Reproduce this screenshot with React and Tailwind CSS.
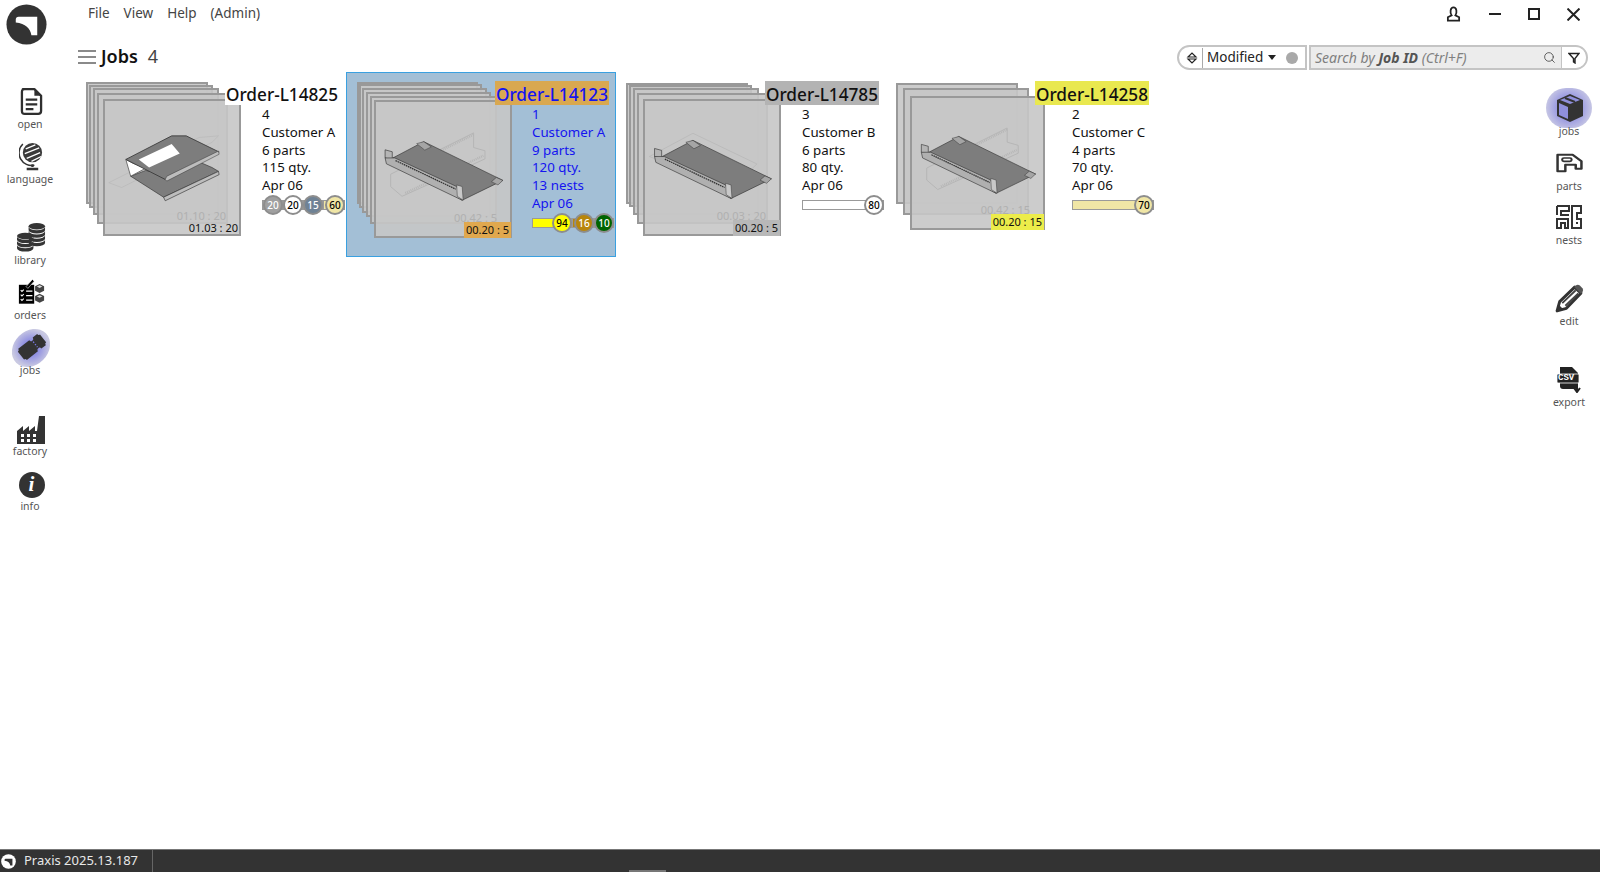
import { Search } from "lucide-react"

const font = "font-['Noto_Sans','Open_Sans',sans-serif]"

function Logo({ className, inner = "#fff" }) {
  return (
    <svg viewBox="0 0 42 42" className={className}>
      <circle cx="21" cy="21" r="20.5" fill="currentColor" />
      <path d="M10 16 Q10 13 13 13 L32 13 L32 32 L26 32 C25 25 20 20 10 19 Z" fill={inner} />
    </svg>
  )
}

function OpenIcon() {
  return (
    <svg viewBox="0 0 24 30" className="w-[23px] h-[29px]">
      <path d="M3 2 H15 L22 9 V25 Q22 28 19 28 H5 Q2 28 2 25 V5 Q2 2 5 2 Z" fill="#fff" stroke="#2f2f2f" strokeWidth="2.4" strokeLinejoin="round" />
      <path d="M15 2 V9 H22 Z" fill="#2f2f2f" />
      <path d="M6 13 H18 M6 18 H18 M6 23 H14" stroke="#2f2f2f" strokeWidth="2.2" />
    </svg>
  )
}

function GlobeIcon() {
  return (
    <svg viewBox="0 0 26 30" className="w-[25px] h-[29px]">
      <circle cx="14" cy="11" r="10" fill="#3a3a3a" />
      <path d="M7 7 L17 3 M6 12 L21 6 M8 17 L22 11 M13 20 L23 15" stroke="#fff" strokeWidth="1.4" />
      <path d="M4 2 A 13 13 0 0 0 16 24" fill="none" stroke="#333" strokeWidth="1.6" />
      <path d="M14 23 V26 M8 28 H20" stroke="#333" strokeWidth="2.4" />
    </svg>
  )
}

function Coins({ x, y, n }) {
  const rows = Array.from({ length: n }, (_, i) => i)
  return (
    <g>
      {rows.map((i) => (
        <path key={i} d={`M${x} ${y + i * 4.4} v3.4 a8.5 3.4 0 0 0 17 0 v-3.4 a8.5 3.4 0 0 1 -17 0 Z`} fill="#353535" />
      ))}
      <ellipse cx={x + 8.5} cy={y - 0.6} rx="8.5" ry="3.4" fill="#353535" />
    </g>
  )
}

function LibraryIcon() {
  return (
    <svg viewBox="0 0 30 30" className="w-[29px] h-[29px]">
      <Coins x={12} y={4} n={4} />
      <Coins x={0} y={14} n={3} />
    </svg>
  )
}

function OrdersIcon() {
  return (
    <svg viewBox="0 0 30 28" className="w-[27px] h-[26px]">
      <rect x="1" y="6" width="17" height="21" fill="#000" />
      <path d="M9 8 L16 0 L18 2 L11 10 Z" fill="#000" stroke="#fff" strokeWidth="0.6" />
      <path d="M3 12 l1.4 1.4 2-2 M3 17 l1.4 1.4 2-2 M3 22 l1.4 1.4 2-2 M9 13 H16 M9 18 H16 M9 23 H16" stroke="#fff" strokeWidth="1.2" fill="none" />
      <path d="M24 5 l5 2.5 v5 l-5 2.5 l-5 -2.5 v-5 Z M24 16 l5 2.5 v5 l-5 2.5 l-5 -2.5 v-5 Z" fill="#444" />
      <path d="M24 6.5 l3 1.5 l-3 1.5 l-3 -1.5 Z M24 17.5 l3 1.5 l-3 1.5 l-3 -1.5 Z" fill="#ddd" />
    </svg>
  )
}

function TicketIcon() {
  return (
    <svg viewBox="0 0 30 30" className="w-[30px] h-[30px]">
      <g transform="rotate(-38 15 15)">
        <path d="M1 10 A2 2 0 0 0 3 8 H17 A2.2 2.2 0 0 0 21.4 8 H27 A2 2 0 0 0 29 10 V20 A2 2 0 0 0 27 22 H21.4 A2.2 2.2 0 0 0 17 22 H3 A2 2 0 0 0 1 20 Z" fill="#333" />
        <path d="M19.2 11.5 V18.5" stroke="#7a7ae6" strokeWidth="1.2" strokeDasharray="1.5 1.5" />
      </g>
    </svg>
  )
}

function FactoryIcon() {
  return (
    <svg viewBox="0 0 28 28" className="w-[28px] h-[28px] mt-[3px]">
      <path d="M0 28 V15 L6 10 V15 L12 10 V15 L18 10 V15 H20 L22 0 H26 L28 0 V28 Z" fill="#333" />
      <path d="M4 18 h3 v3 h-3 Z M10 18 h3 v3 h-3 Z M16 18 h3 v3 h-3 Z M4 23 h3 v3 h-3 Z M10 23 h3 v3 h-3 Z M16 23 h3 v3 h-3 Z" fill="#fff" />
    </svg>
  )
}

function InfoIcon() {
  return (
    <div className="w-[26px] h-[26px] mt-[3px] rounded-full bg-[#333] text-white flex items-center justify-center font-['Liberation_Serif',serif] italic font-bold text-[21px] leading-none">
      i
    </div>
  )
}

function BoxIcon() {
  return (
    <svg viewBox="0 0 30 30" className="w-[30px] h-[30px] ml-[1px]">
      <path d="M15 1 L28 7 V23 L15 29 L2 23 V7 Z" fill="#333" />
      <path d="M4 10 L13 14 V26 L4 22 Z" fill="#8f8fdc" />
      <path d="M5 7 L15 3 L25 7 L15 11 Z" fill="#8f8fdc" />
      <path d="M10 5 L20 9" stroke="#333" strokeWidth="2" />
    </svg>
  )
}

function PartsIcon() {
  return (
    <svg viewBox="0 0 26 24" preserveAspectRatio="none" className="w-[27px] h-[20px] ml-[1px]">
      <path d="M1.5 2 H16 L24.5 10 V19 H19 V14 H9 V22 H1.5 Z" fill="none" stroke="#333" strokeWidth="2.4" strokeLinejoin="round" />
      <rect x="6" y="6" width="9" height="4" rx="1.5" fill="none" stroke="#333" strokeWidth="2" />
    </svg>
  )
}

function NestsIcon() {
  return (
    <svg viewBox="0 0 26 24" className="w-[26px] h-[24px]" fill="none" stroke="#333" strokeWidth="2">
      <path d="M1 1 H13 V6 H5 V10 H13 M1 1 V10 M1 14 H12 V23 H9 V18 H5 V23 H1 Z" />
      <path d="M16 1 H25 V8 H21 V14 H25 V23 H16 Z M20 18 H22" />
    </svg>
  )
}

function EditIcon() {
  return (
    <svg viewBox="0 0 28 28" className="w-[29px] h-[29px]">
      <path d="M2 26 L4.5 17 L19 3 L25 9 L11 23.5 Z" fill="#fff" stroke="#333" strokeWidth="2.8" strokeLinejoin="round" />
      <path d="M2 26 L3.6 20 L8 24.4 Z" fill="#333" />
      <path d="M7 18.5 L20 6 M10 21 L22.5 9" stroke="#444" strokeWidth="1.8" />
      <path d="M20 1.5 Q22 0 24 1.5 L26.5 4 Q28 6 26.5 8 L25 9.5 L18.5 3 Z" fill="#555" />
    </svg>
  )
}

function ExportIcon() {
  return (
    <div className="relative w-[26px] h-[27px]">
      <svg viewBox="0 0 26 27" className="w-[26px] h-[27px]">
        <path d="M4 1 H16 L22 7 V20 Q22 23 19 23 H7 Q4 23 4 20 Z" fill="#222" />
        <rect x="1" y="8" width="22" height="9" rx="1" fill="#222" stroke="#fff" strokeWidth="0.8" />
        <path d="M21 18 V25 M18 22 L21 26 L24 22" stroke="#222" strokeWidth="2" fill="none" />
      </svg>
      <span className="absolute left-[2px] top-[8px] text-[9px] leading-[9px] font-bold text-white font-['Liberation_Mono',monospace]">CSV</span>
    </div>
  )
}

function RailItem({ icon, label, className = "h-[55px]", iconClass = "" }) {
  return (
    <div className={`flex flex-col items-center ${className}`}>
      <div className={`h-[32px] flex items-center justify-center ${iconClass}`}>{icon}</div>
      <span className="text-[10.5px] leading-[14px] text-[#555]">{label}</span>
    </div>
  )
}

function PlatePart({ ghost }) {
  return (
    <svg viewBox="310 297 412 412" className="absolute inset-0 w-full h-full">
      {ghost && <path d="M320 550 L600 410 L660 405 L640 425 L360 565 Z" fill="none" stroke="#b8b8b8" strokeWidth="2" />}
      {/* lower plate sits behind the upper one */}
      <path d="M388 530 L490 595 L660 515 L640 503 L545 462 L445 515 L435 512 Z" fill="#7d7d7d" stroke="#333" strokeWidth="2" />
      <path d="M490 595 L495 606 L662 525 L660 515 Z" fill="#bdbdbd" stroke="#333" strokeWidth="2" />
      <path d="M373 478 L388 530 L435 505 L395 490 Z" fill="#fff" stroke="#333" strokeWidth="2" />
      <path d="M373 478 L515 405 L560 405 L662 455 L495 540 Z" fill="#7d7d7d" stroke="#333" strokeWidth="2.5" />
      <path d="M413 478 L515 430 L540 460 L445 503 Z" fill="#fff" />
      <path d="M495 540 L500 530 L660 452 L662 462 L500 545 Z" fill="#bdbdbd" stroke="#333" strokeWidth="1.5" />
    </svg>
  )
}

function BracketPart({ ghost }) {
  return (
    <svg viewBox="0 0 412 412" className="absolute inset-0 w-full h-full">
      {ghost === "flat" && <path d="M12 172 L147 100 L345 195 L265 275 Z" fill="none" stroke="#b5b5b5" strokeWidth="2" />}
      {ghost === "rail" && (
        <g fill="none" stroke="#b5b5b5">
          <path d="M45 222 L300 95 L300 140 L335 150 L335 175 L80 290 L45 260 Z" strokeWidth="3" />
          <path d="M90 280 L330 165 M120 190 L300 100" strokeWidth="7" strokeDasharray="3 3" />
        </g>
      )}
      <path d="M52 172 L147 122 L390 241 L265 302 Z" fill="#7d7d7d" stroke="#333" strokeWidth="2" />
      <path d="M28 147 L50 153 L50 178 L28 172 Z" fill="#b5b5b5" stroke="#333" strokeWidth="2" />
      <path d="M28 172 L32 190 L265 302 L248 260 L58 172 Z" fill="#b0b0b0" stroke="#333" strokeWidth="2" />
      <path d="M60 180 L245 268" stroke="#333" strokeWidth="4" strokeDasharray="5 2" />
      <path d="M248 255 L265 260 L268 302 L250 290 Z" fill="#c8c8c8" stroke="#333" strokeWidth="1.5" />
      <path d="M125 128 L147 122 L170 138 L150 148 Z M355 245 L370 232 L390 241 L375 255 Z" fill="#a5a5a5" stroke="#333" strokeWidth="1.5" />
    </svg>
  )
}

function Sheets({ rects, chip, ghostTime, time, part, partGhost }) {
  const front = rects[rects.length - 1]
  return (
    <div className="relative w-[176px] shrink-0 mt-px">
      {rects.map((r, i) => {
        const isFront = i === rects.length - 1
        return (
          <div
            key={i}
            className="absolute bg-[#c6c6c6]/90 border-2 border-[#999]"
            style={{ left: r[0], top: r[1], width: r[2] - r[0], height: r[3] - r[1] }}
          >
            {isFront && part === "plate" && <PlatePart ghost={partGhost} />}
            {isFront && part === "bracket" && <BracketPart ghost={partGhost} />}
          </div>
        )
      })}
      <div
        className="absolute flex flex-col items-end justify-end text-[11px]"
        style={{ left: front[0], top: front[1], width: front[2] - front[0] - 1, height: front[3] - front[1] }}
      >
        <span className="text-[#b0b0b0] pr-[14px] leading-[14px] -mb-[3px]">{ghostTime}</span>
        <span className={`relative px-[2px] leading-[16px] text-[#111] ${chip}`}>{time}</span>
      </div>
    </div>
  )
}

function ProgressBar({ segments }) {
  return (
    <div className="flex h-[20px] w-[90px]">
      {segments.map((s, i) => (
        <div key={i} className="relative flex items-center h-[20px] shrink-0" style={{ width: s.w }}>
          <div className={`w-full h-[10px] border border-[#9a9a9a] ${s.bar}`} />
          <div className={`absolute right-0 top-0 w-[20px] h-[20px] rounded-full border-2 border-[#8d8d8d] flex items-center justify-center text-[10px] font-medium leading-none ${s.dot}`}>
            {s.n}
          </div>
        </div>
      ))}
    </div>
  )
}

const jobs = [
  {
    title: "Order-L14825",
    titleBg: "bg-white",
    lines: ["4", "Customer A", "6 parts", "115 qty.", "Apr 06"],
    rects: [[0, 0, 122, 122], [3, 3, 127, 126], [7, 6, 133, 133], [11, 11, 142, 142], [17, 17, 155, 154]],
    chip: "",
    ghostTime: "01.10 : 20",
    time: "01.03 : 20",
    part: "plate",
    partGhost: true,
    segments: [
      { w: 21, n: 20, bar: "bg-[#a0a0a0]", dot: "bg-[#a0a0a0] text-white" },
      { w: 20, n: 20, bar: "bg-white", dot: "bg-white text-black" },
      { w: 20, n: 15, bar: "bg-[#6f8295]", dot: "bg-[#6f8295] text-white" },
      { w: 22, n: 60, bar: "bg-[#f0e6a6]", dot: "bg-[#f0e6a6] text-black" },
    ],
  },
  {
    title: "Order-L14123",
    titleBg: "bg-[#d9a850]",
    selected: true,
    lines: ["1", "Customer A", "9 parts", "120 qty.", "13 nests", "Apr 06"],
    rects: [[1, 0, 122, 122], [3, 2, 126, 126], [6, 6, 131, 131], [10, 10, 135, 135], [14, 14, 141, 142], [18, 18, 156, 156]],
    chip: "bg-[#e0a84e]",
    ghostTime: "00.42 : 5",
    time: "00.20 : 5",
    part: "bracket",
    partGhost: "rail",
    segments: [
      { w: 40, n: 94, bar: "bg-[#ffff00]", dot: "bg-[#ffff00] text-black" },
      { w: 22, n: 16, bar: "bg-[#b8860b]", dot: "bg-[#b8860b] text-white" },
      { w: 20, n: 10, bar: "bg-[#006400]", dot: "bg-[#006400] text-white" },
    ],
  },
  {
    title: "Order-L14785",
    titleBg: "bg-[#b3b3b3]",
    lines: ["3", "Customer B", "6 parts", "80 qty.", "Apr 06"],
    rects: [[0, 1, 122, 122], [3, 3, 126, 125], [7, 6, 133, 133], [11, 11, 142, 142], [17, 17, 155, 154]],
    chip: "bg-[#b8b8b8]",
    ghostTime: "00.03 : 20",
    time: "00.20 : 5",
    part: "bracket",
    partGhost: "flat",
    segments: [{ w: 82, n: 80, bar: "bg-white", dot: "bg-white text-black" }],
  },
  {
    title: "Order-L14258",
    titleBg: "bg-[#e9e84f]",
    lines: ["2", "Customer C", "4 parts", "70 qty.", "Apr 06"],
    rects: [[0, 1, 122, 122], [7, 6, 133, 133], [14, 14, 149, 148]],
    chip: "bg-[#ecec4a]",
    ghostTime: "00.42 : 15",
    time: "00.20 : 15",
    part: "bracket",
    partGhost: "rail",
    segments: [{ w: 82, n: 70, bar: "bg-[#f0e6a6]", dot: "bg-[#f0e6a6] text-black" }],
  },
]

function JobCard({ job }) {
  return (
    <div
      className={`w-[270px] h-[185px] flex pl-[10px] pt-[9px] shrink-0 ${
        job.selected ? "bg-[#a3bfd6] outline outline-1 -outline-offset-1 outline-[#3aa0e0] text-[#1414f0]" : "text-[#111]"
      }`}
    >
      <Sheets {...job} />
      <div className="w-[77px] flex flex-col items-start">
        <div className={`self-end relative z-10 whitespace-nowrap text-[17.2px] font-medium leading-[27px] h-[24px] px-px ${job.titleBg}`}>
          {job.title}
        </div>
        {job.lines.map((line, i) => (
          <div key={i} className="relative z-10 h-[17.75px] leading-[19.5px] text-[13.3px] whitespace-nowrap">{line}</div>
        ))}
        <div className="relative z-10 mt-[1.5px]">
          <ProgressBar segments={job.segments} />
        </div>
      </div>
    </div>
  )
}

export default function App() {
  return (
    <div className={`w-full h-screen flex flex-col bg-white overflow-hidden ${font}`}>
      <div className="flex flex-1 min-h-0">
        {/* left rail */}
        <div className="w-[60px] shrink-0 relative flex flex-col items-center pt-[85px]">
          <Logo className="absolute left-[6px] top-[4px] w-[41px] h-[41px] text-[#333]" />
          <RailItem icon={<OpenIcon />} label="open" iconClass="ml-[3px]" />
          <RailItem icon={<GlobeIcon />} label="language" iconClass="ml-[3px]" />
          <RailItem icon={<LibraryIcon />} label="library" className="h-[55px] mt-[26px]" iconClass="ml-[3px]" />
          <RailItem icon={<OrdersIcon />} label="orders" iconClass="ml-[3px]" />
          <div className="relative">
            <div className="absolute left-[-4px] top-[0px] w-[42px] h-[34px] -rotate-45 rounded-[50%] bg-[radial-gradient(circle,#7d7de0_15%,#c9c9e2_70%)]" />
            <RailItem icon={<TicketIcon />} label="jobs" className="relative h-[55px]" iconClass="ml-[3px]" />
          </div>
          <RailItem icon={<FactoryIcon />} label="factory" className="h-[55px] mt-[26px]" iconClass="ml-[3px]" />
          <RailItem icon={<InfoIcon />} label="info" iconClass="ml-[3px]" />
        </div>

        <div className="flex-1 min-w-0 flex flex-col">
          {/* menu + window controls */}
          <div className="h-[43px] shrink-0 flex items-start justify-between pl-[28px] pr-[20px]">
            <div className="flex gap-[14px] text-[13.5px] leading-[27px] text-[#444]">
              <span>File</span>
              <span>View</span>
              <span>Help</span>
              <span>(Admin)</span>
            </div>
            <div className="flex items-center h-[28px] gap-[26px]">
              <svg viewBox="0 0 16 17" className="w-[15px] h-[16px]" fill="none" stroke="#222" strokeWidth="1.9">
                <path d="M6 10 C4 7 4.5 1.5 8 1.5 C11.5 1.5 12 7 10 10 L14 12 V15.5 H2 V12 Z" />
              </svg>
              <div className="w-[12px] h-[2px] bg-[#222] ml-[2px]" />
              <div className="w-[12px] h-[12px] border-2 border-[#222] ml-[1px]" />
              <svg viewBox="0 0 12 12" className="w-[13px] h-[13px] ml-[1px]" stroke="#222" strokeWidth="1.8">
                <path d="M0.5 0.5 L11.5 11.5 M11.5 0.5 L0.5 11.5" />
              </svg>
            </div>
          </div>

          {/* header row */}
          <div className="h-[29px] shrink-0 flex items-center justify-between pl-[18px] pr-[12px]">
            <div className="flex items-center -mt-[2px]">
              <div className="w-[18px] flex flex-col gap-[4px] mr-[5px] mt-[1px]">
                <div className="h-[2px] bg-[#8a8a8a]" />
                <div className="h-[2px] bg-[#8a8a8a]" />
                <div className="h-[2px] bg-[#8a8a8a]" />
              </div>
              <span className="text-[18px] font-semibold text-[#111]">Jobs</span>
              <span className="text-[18px] text-[#444] ml-[10px]">4</span>
            </div>
            <div className="flex items-center h-[25px] gap-[2px] text-[14px]">
              <div className="w-[130px] h-full border-2 border-[#c4c4c4] rounded-l-full flex items-center">
                <div className="w-[24px] h-[20px] flex items-center justify-center border-r border-[#aaa] pl-[2px]">
                  <svg viewBox="0 0 12 14" className="w-[12px] h-[14px]" fill="none" stroke="#222" strokeWidth="1.2">
                    <path d="M2 6 L6 2 L10 6 Z" />
                    <path d="M2 8 H10 L6 12 Z" />
                  </svg>
                </div>
                <span className="ml-[4px] text-[13.5px] leading-[23px] text-[#222]">Modified</span>
                <div className="ml-[5px] w-0 h-0 border-x-[4px] border-x-transparent border-t-[5px] border-t-[#222]" />
                <div className="ml-auto mr-[7px] w-[12px] h-[12px] rounded-full bg-[#a9a9a9]" />
              </div>
              <div className="w-[279px] h-full border-2 border-[#c4c4c4] rounded-r-full flex items-center bg-[#ececec]">
                <span className="pl-[4px] flex-1 text-[14px] italic text-[#808080]">
                  Search by <b className="text-[#555]">Job ID</b> (Ctrl+F)
                </span>
                <Search className="w-[13px] h-[13px] text-[#444] mr-[5px]" strokeWidth={1.5} />
                <div className="w-[25px] h-full bg-white border-l border-[#c4c4c4] rounded-r-full flex items-center justify-center">
                  <svg viewBox="0 0 12 12" className="w-[12px] h-[12px]" fill="none" stroke="#222" strokeWidth="1.4">
                    <path d="M1 1.5 H11 L7 6.5 V11 L5.5 10 V6.5 Z" />
                  </svg>
                </div>
              </div>
            </div>
          </div>

          <div className="flex-1 min-h-0 flex">
            {/* job cards */}
            <div className="flex-1 min-w-0 flex items-start pl-[16px]">
              {jobs.map((job) => (
                <JobCard key={job.title} job={job} />
              ))}
            </div>

            {/* right rail */}
            <div className="w-[62px] shrink-0 flex flex-col items-center pt-[20px]">
              <div className="relative">
                <div className="absolute left-[-8px] top-[-4px] w-[46px] h-[40px] rounded-full bg-[radial-gradient(circle,#8f8fe0_30%,#c6c6e4_75%)]" />
                <RailItem icon={<BoxIcon />} label="jobs" className="relative h-[55px]" />
              </div>
              <RailItem icon={<PartsIcon />} label="parts" className="h-[54px]" />
              <RailItem icon={<NestsIcon />} label="nests" className="h-[81px]" />
              <RailItem icon={<EditIcon />} label="edit" className="h-[81px]" />
              <RailItem icon={<ExportIcon />} label="export" />
            </div>
          </div>
        </div>
      </div>

      {/* status bar */}
      <div className="relative h-[23px] shrink-0 bg-[#333] border-t border-[#777] flex items-center text-[#e8e8e8] text-[13px]">
        <Logo className="w-[15px] h-[15px] text-white ml-[1px]" inner="#333" />
        <span className="ml-[8px]">Praxis 2025.13.187</span>
        <div className="ml-[14px] w-px h-full bg-[#666]" />
        <div className="absolute left-[629px] bottom-0 w-[37px] h-[2px] bg-[#777]" />
      </div>
    </div>
  )
}
